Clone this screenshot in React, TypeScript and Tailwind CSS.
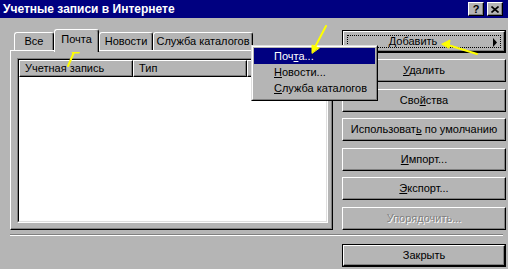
import React from "react"

const raised =
  "border border-t-white border-l-white border-r-black border-b-black shadow-[inset_-1px_-1px_0_#808080]"

function Btn({
  children,
  className = "",
  isDefault = false,
  focus = false,
  disabled = false,
  arrow = false,
}: {
  children: React.ReactNode
  className?: string
  isDefault?: boolean
  focus?: boolean
  disabled?: boolean
  arrow?: boolean
}) {
  const text = disabled
    ? "text-[#808080] [text-shadow:1px_1px_0_#ffffff]"
    : "text-black"

  const inner = (
    <div className={`relative h-full w-full bg-[#b5b5b5] ${raised} flex items-center justify-center`}>
      {focus && (
        <div className="absolute inset-[3px] border border-dotted border-black" />
      )}
      <span className={`${text} ${arrow ? "pr-[22px]" : ""} leading-none`}>{children}</span>
      {arrow && (
        <svg className="absolute right-[6px] top-[6px]" width="6" height="9" viewBox="0 0 6 9">
          <path d="M1 0 L5 4.5 L1 9 Z" fill="black" />
        </svg>
      )}
    </div>
  )

  if (isDefault) {
    return (
      <div className={`h-[23px] w-[164px] border border-black ${className}`}>{inner}</div>
    )
  }
  return <div className={`h-[23px] w-[164px] ${className}`}>{inner}</div>
}

function Tab({
  label,
  width,
  selected = false,
}: {
  label: string
  width: string
  selected?: boolean
}) {
  return (
    <div
      className={`${width} ${
        selected ? "relative z-10 h-[23px] -mb-[2px] pb-[3px]" : "h-[18px]"
      } flex items-center justify-center rounded-t-[3px] border-t border-l border-r border-t-white border-l-white border-r-black shadow-[inset_-1px_0_0_#808080] bg-[#b5b5b5]`}
    >
      <span className="leading-none">{label}</span>
    </div>
  )
}

export default function App() {
  return (
    <div className="relative w-[508px] h-[269px] overflow-hidden bg-[#b5b5b5] text-[11px] text-black font-['Liberation_Sans',Arial,sans-serif]">
      {/* TITLE BAR */}
      <div className="h-[18px] bg-[#000080] flex items-center justify-between pl-[3px] pr-[5px]">
        <span className="text-white font-bold text-[12px] leading-none">
          Учетные записи в Интернете
        </span>
        <div className="flex gap-[3px]">
          <div className={`w-[16px] h-[14px] bg-[#b5b5b5] ${raised} flex items-center justify-center font-bold text-[11px] leading-none`}>
            ?
          </div>
          <div className={`w-[16px] h-[14px] bg-[#b5b5b5] ${raised} flex items-center justify-center`}>
            <svg width="8" height="7" viewBox="0 0 8 7">
              <path d="M0.5 0.5 L7.5 6.5 M7.5 0.5 L0.5 6.5" stroke="black" strokeWidth="1.6" />
            </svg>
          </div>
        </div>
      </div>

      {/* MAIN */}
      <div className="flex pl-[10px] pt-[11px]">
        {/* TABS + PANEL */}
        <div className="w-[323px] flex flex-col">
          <div className="h-[21px] flex items-end pl-[4px]">
            <Tab label="Все" width="w-[40px]" />
            <Tab label="Почта" width="w-[45px]" selected />
            <Tab label="Новости" width="w-[54px]" />
            <Tab label="Служба каталогов" width="w-[100px]" />
          </div>
          <div className={`h-[180px] ${raised} flex pt-[7px] pl-[6px] pr-[4px] pb-[6px]`}>
            {/* LIST VIEW */}
            <div className="flex-1 border border-t-[#808080] border-l-[#808080] border-r-white border-b-white">
              <div className="h-full border border-t-black border-l-black border-r-[#dfdfdf] border-b-[#dfdfdf] bg-white flex flex-col">
                <div className="h-[17px] flex bg-[#b5b5b5]">
                  <div className={`w-[114px] ${raised} flex items-center pl-[5px]`}>
                    <span className="leading-none">Учетная запись</span>
                  </div>
                  <div className={`w-[114px] ${raised} flex items-center pl-[5px]`}>
                    <span className="leading-none">Тип</span>
                  </div>
                  <div className={`flex-1 ${raised}`} />
                </div>
              </div>
            </div>
          </div>
        </div>

        {/* BUTTONS */}
        <div className="ml-[9px] mt-[1px] flex flex-col">
          <Btn isDefault focus arrow>
            <u>Д</u>обавить
          </Btn>
          <Btn className="mt-[6px]">
            <u>У</u>далить
          </Btn>
          <Btn className="mt-[7px]">
            Сво<u>й</u>ства
          </Btn>
          <Btn className="mt-[6px]">
            Использоват<u>ь</u> по умолчанию
          </Btn>
          <Btn className="mt-[7px]">
            <u>И</u>мпорт...
          </Btn>
          <Btn className="mt-[6px]">
            <u>Э</u>кспорт...
          </Btn>
          <Btn className="mt-[7px]" disabled>
            Упоря<u>д</u>очить...
          </Btn>
        </div>
      </div>

      {/* SEPARATOR */}
      <div className="mt-[4px] ml-[10px] mr-[5px] h-[2px] border-t border-t-[#808080] border-b border-b-white" />

      {/* CLOSE */}
      <div className="flex justify-end pr-[2px] mt-[8px]">
        <Btn isDefault>Закрыть</Btn>
      </div>

      {/* POPUP MENU */}
      <div className="absolute left-[251px] top-[45px] w-[127px] border border-t-[#dfdfdf] border-l-[#dfdfdf] border-r-black border-b-black">
        <div className="border border-t-white border-l-white border-r-[#808080] border-b-[#808080] bg-[#b5b5b5] p-[1px] pb-[3px]">
          <div className="h-[16px] bg-[#000080] text-white flex items-center pl-[20px]">
            <span className="leading-none">
              Поч<u>т</u>а...
            </span>
          </div>
          <div className="h-[16px] flex items-center pl-[20px]">
            <span className="leading-none">
              <u>Н</u>овости...
            </span>
          </div>
          <div className="h-[16px] flex items-center pl-[20px]">
            <span className="leading-none">
              <u>С</u>лужба каталогов
            </span>
          </div>
        </div>
      </div>

      {/* YELLOW ANNOTATION ARROWS */}
      <svg className="absolute left-0 top-0 pointer-events-none" width="508" height="269" viewBox="0 0 508 269">
        <g stroke="#ffff00" strokeWidth="2" fill="#ffff00" strokeLinecap="round">
          <line x1="68" y1="66" x2="75" y2="50" />
          <path d="M76 45 L72 53 L79 53 Z" strokeWidth="1" />
          <line x1="326" y1="26" x2="315" y2="47" />
          <path d="M312 53 L312 45 L319 48 Z" strokeWidth="1" />
          <line x1="477" y1="54" x2="448" y2="45" />
          <path d="M442 44 L450 40 L449 48 Z" strokeWidth="1" />
        </g>
      </svg>
    </div>
  )
}
